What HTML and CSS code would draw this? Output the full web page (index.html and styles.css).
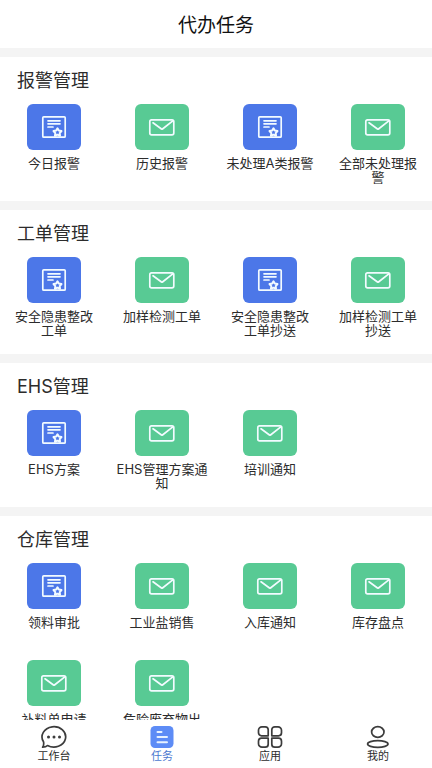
FILE: index.html
```html
<!DOCTYPE html>
<html lang="zh-CN">
<head>
<meta charset="utf-8">
<meta name="viewport" content="width=device-width, initial-scale=1">
<title>代办任务</title>
<link rel="stylesheet" href="styles.css">
</head>
<body>
<svg class="sprite" aria-hidden="true">
  <symbol id="doc" viewBox="0 0 54 46">
    <rect x="15.8" y="12.8" width="22.4" height="20.4" rx="1"/>
    <path d="M21 16.8h12M21 19.8h12M21 23h5"/>
    <path class="star" d="M30.500 24.300l1.300 2.300 2.700.5-1.800 2 .3 2.700-2.500-1.100-2.500 1.100.3-2.700-1.800-2 2.700-.5z"/>
  </symbol>
  <symbol id="mail" viewBox="0 0 54 46">
    <rect x="14.8" y="15.8" width="24" height="15" rx="1.8"/>
    <path d="M18 18.800l8.500 6.200q.5.300 1 0L37.800 16.800"/>
  </symbol>
</svg>
<header class="header"><h1>代办任务</h1></header>
<main class="content">
  <section class="group">
    <h2>报警管理</h2>
    <div class="grid">
      <a class="item" href="#"><svg class="tile blue"><use href="#doc"/></svg><span>今日报警</span></a>
      <a class="item" href="#"><svg class="tile green"><use href="#mail"/></svg><span>历史报警</span></a>
      <a class="item" href="#"><svg class="tile blue"><use href="#doc"/></svg><span>未处理A类报警</span></a>
      <a class="item" href="#"><svg class="tile green"><use href="#mail"/></svg><span>全部未处理报<br>警</span></a>
    </div>
  </section>
  <section class="group">
    <h2>工单管理</h2>
    <div class="grid">
      <a class="item" href="#"><svg class="tile blue"><use href="#doc"/></svg><span>安全隐患整改<br>工单</span></a>
      <a class="item" href="#"><svg class="tile green"><use href="#mail"/></svg><span>加样检测工单</span></a>
      <a class="item" href="#"><svg class="tile blue"><use href="#doc"/></svg><span>安全隐患整改<br>工单抄送</span></a>
      <a class="item" href="#"><svg class="tile green"><use href="#mail"/></svg><span>加样检测工单<br>抄送</span></a>
    </div>
  </section>
  <section class="group">
    <h2>EHS管理</h2>
    <div class="grid">
      <a class="item" href="#"><svg class="tile blue"><use href="#doc"/></svg><span>EHS方案</span></a>
      <a class="item" href="#"><svg class="tile green"><use href="#mail"/></svg><span>EHS管理方案通<br>知</span></a>
      <a class="item" href="#"><svg class="tile green"><use href="#mail"/></svg><span>培训通知</span></a>
    </div>
  </section>
  <section class="group">
    <h2>仓库管理</h2>
    <div class="grid">
      <a class="item" href="#"><svg class="tile blue"><use href="#doc"/></svg><span>领料审批</span></a>
      <a class="item" href="#"><svg class="tile green"><use href="#mail"/></svg><span>工业盐销售</span></a>
      <a class="item" href="#"><svg class="tile green"><use href="#mail"/></svg><span>入库通知</span></a>
      <a class="item" href="#"><svg class="tile green"><use href="#mail"/></svg><span>库存盘点</span></a>
      <a class="item" href="#"><svg class="tile green"><use href="#mail"/></svg><span>补料单申请</span></a>
      <a class="item" href="#"><svg class="tile green"><use href="#mail"/></svg><span>危险废弃物出</span></a>
    </div>
  </section>
</main>
<nav class="tabs">
  <a class="tab" href="#">
    <svg viewBox="0 0 28 24"><path d="M3.500 16.800A11.800 10.200 0 1 1 7.500 20.500Q6 22.200 2.600 22.200Q4.200 20 3.500 16.800Z"/><path class="dots" d="M8.500 12h.01M14 12h.01M19.500 12h.01"/></svg>
    <span>工作台</span>
  </a>
  <a class="tab active" href="#" aria-current="page">
    <svg viewBox="0 0 28 24"><rect class="plate" x="2.500" y="1" width="23" height="22" rx="4.500"/><path class="lines" d="M9.500 7h4M9.500 12h9.500M9.500 17.200h9.500"/></svg>
    <span>任务</span>
  </a>
  <a class="tab" href="#">
    <svg viewBox="0 0 28 24"><path d="M6 1.800h3.200a3 3 0 0 1 3 3V10.800H5.500a3 3 0 0 1-3-3V5.300A3.500 3.500 0 0 1 6 1.800zM18.800 1.800H22a3.500 3.500 0 0 1 3.500 3.500V7.800a3 3 0 0 1-3 3H15.800V4.800a3 3 0 0 1 3-3zM5.500 13.200h6.700V19.200a3 3 0 0 1-3 3H6A3.500 3.500 0 0 1 2.500 18.700V16.200a3 3 0 0 1 3-3zM15.800 13.200h6.700a3 3 0 0 1 3 3V18.700A3.500 3.500 0 0 1 22 22.200H18.800a3 3 0 0 1-3-3z"/></svg>
    <span>应用</span>
  </a>
  <a class="tab" href="#">
    <svg viewBox="0 0 28 24"><ellipse cx="13.800" cy="7" rx="6.200" ry="5.300"/><ellipse cx="13.800" cy="19" rx="10.200" ry="3.300"/></svg>
    <span>我的</span>
  </a>
</nav>
</body>
</html>
```
FILE: styles.css
```css
* {
  box-sizing: border-box;
}

body {
  display: flex;
  flex-direction: column;
  height: 100vh;
  margin: 0;
  background: #fff;
  color: #2c2c2c;
  font-family: Inter, "Noto Sans CJK SC", sans-serif;
}

h1,
h2 {
  margin: 0;
  font-weight: 400;
}

a {
  color: inherit;
  text-decoration: none;
}

svg {
  fill: none;
  stroke-linecap: round;
  stroke-linejoin: round;
}

.sprite {
  position: absolute;
  width: 0;
  height: 0;
}

.header {
  flex: none;
  padding: 12px 0 8px;
  text-align: center;
}

.header h1 {
  color: #111;
  font-size: 19px;
  line-height: 28px;
}

.content {
  flex: 1;
  min-height: 0;
  overflow-y: auto;
  scrollbar-width: none;
  background: #f4f4f4;
}

.group {
  margin-top: 9px;
  background: #fff;
}

.group h2 {
  padding: 10px 17px 9px;
  font-size: 18px;
  line-height: 28px;
}

.grid {
  display: grid;
  grid-template-columns: repeat(4, 1fr);
}

.item {
  display: flex;
  flex-direction: column;
  align-items: center;
  gap: 6px;
  min-height: 97px;
  font-size: 13px;
  line-height: 14px;
  text-align: center;
}

.tile {
  width: 54px;
  height: 46px;
  border-radius: 6px;
  stroke: #f2fbff;
  stroke-width: 1.7;
}

.star {
  stroke-width: 2;
}

.blue {
  background: #4c77e8;
}

.green {
  background: #58ca94;
}

.tabs {
  display: grid;
  flex: none;
  grid-template-columns: repeat(4, 1fr);
  height: 48px;
  padding-top: 5px;
  background: #fff;
}

.tab {
  display: flex;
  flex-direction: column;
  align-items: center;
  font-size: 11px;
  line-height: 14px;
}

.tab svg {
  width: 28px;
  height: 24px;
  stroke: #3c3c3c;
  stroke-width: 1.7;
}

.tab .dots {
  stroke-width: 3;
}

.tab .plate {
  fill: #5d8cf6;
  stroke: none;
}

.tab .lines {
  stroke: #e8f2ff;
  stroke-width: 2;
}

.tab.active {
  color: #4c78d0;
}
```
